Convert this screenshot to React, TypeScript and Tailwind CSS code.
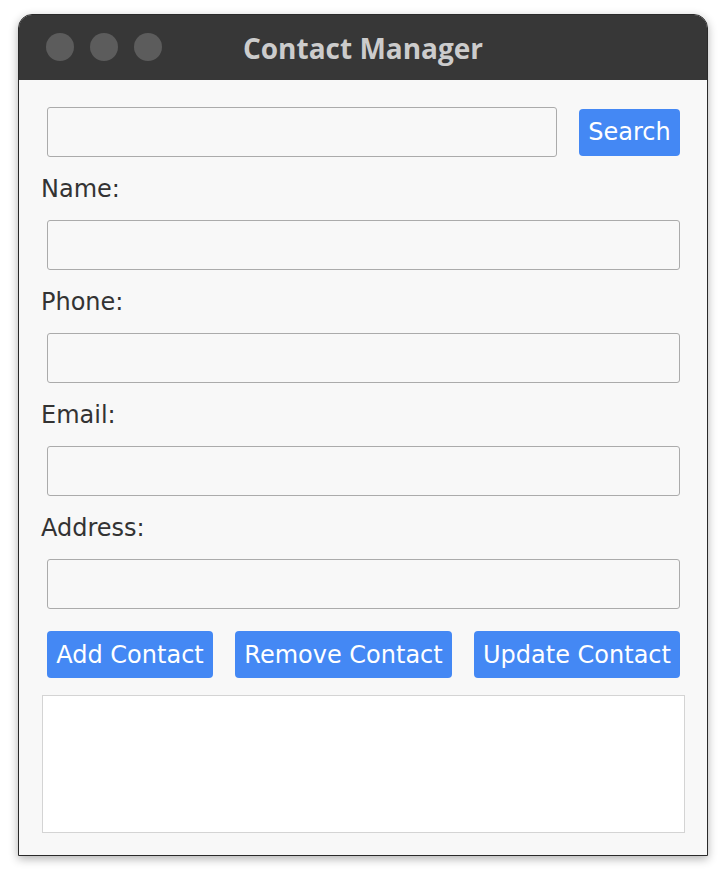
import React from "react";

const font = { fontFamily: '"DejaVu Sans", sans-serif' };

function Field({ label }: { label: string }) {
  return (
    <>
      <div className="h-[63px] flex items-center pl-[22px] text-[24px] text-[#333333] leading-[28px]">
        {label}
      </div>
      <div className="pl-[28px] pr-[27px]">
        <input
          type="text"
          className="block w-full h-[50px] bg-[#f8f8f8] border border-[#ababab] rounded-[3px] outline-none"
        />
      </div>
    </>
  );
}

function Btn({ children, className = "" }: { children: React.ReactNode; className?: string }) {
  return (
    <button
      className={
        "h-[47px] px-[10px] bg-[#4488f4] text-white text-[24px] leading-[28px] rounded-[4px] flex items-center justify-center whitespace-nowrap " +
        className
      }
    >
      {children}
    </button>
  );
}

export default function App() {
  return (
    <div className="w-[727px] h-[875px] bg-white pt-[14px] pl-[18px]" style={font}>
      <div className="w-[690px] h-[842px] rounded-t-[14px] border border-[#2a2a2a] shadow-[0_3px_10px_rgba(0,0,0,0.3)] overflow-hidden flex flex-col">
        <div className="h-[65px] bg-[#373737] relative flex items-center justify-center shrink-0">
          <div className="absolute left-[27px] top-[18px] flex gap-[16px]">
            <div className="w-[28px] h-[28px] rounded-full bg-[#5c5c5c]" />
            <div className="w-[28px] h-[28px] rounded-full bg-[#5c5c5c]" />
            <div className="w-[28px] h-[28px] rounded-full bg-[#5c5c5c]" />
          </div>
          <div
            className="text-[28px] font-bold text-[#cccccc] leading-none"
            style={{ fontFamily: '"Open Sans", Lato, sans-serif' }}
          >
            Contact Manager
          </div>
        </div>
        <div className="flex-1 bg-[#f8f8f8] flex flex-col pt-[27px]">
          <div className="flex items-center pl-[28px] pr-[27px] gap-[22px]">
            <input
              type="text"
              className="block flex-1 h-[50px] bg-[#f8f8f8] border border-[#ababab] rounded-[3px] outline-none"
            />
            <Btn className="w-[101px]">Search</Btn>
          </div>
          <Field label="Name:" />
          <Field label="Phone:" />
          <Field label="Email:" />
          <Field label="Address:" />
          <div className="flex justify-between pl-[28px] pr-[27px] mt-[22px]">
            <Btn className="w-[166px]">Add Contact</Btn>
            <Btn className="w-[217px]">Remove Contact</Btn>
            <Btn className="w-[206px]">Update Contact</Btn>
          </div>
          <div className="ml-[23px] mr-[22px] mt-[17px] h-[138px] bg-white border border-[#d4d4d4]" />
        </div>
      </div>
    </div>
  );
}
